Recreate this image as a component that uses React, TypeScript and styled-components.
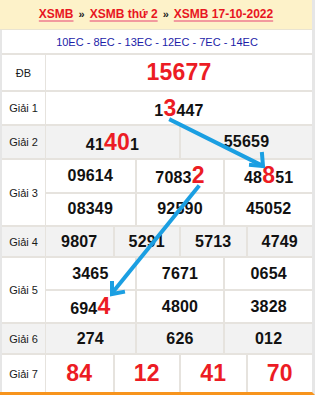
import React from 'react';
import styled, { createGlobalStyle } from 'styled-components';

const GlobalStyle = createGlobalStyle`
  html, body {
    margin: 0;
    padding: 0;
    background: #ffffff;
  }
  body {
    font-family: "Liberation Sans", Arial, sans-serif;
  }
`;

// Whole result card; the arrow overlay sits on top of it.
const Page = styled.div`
  position: relative;
  width: 315px;
  height: 395px;
`;

const Board = styled.div`
  width: 315px;
  height: 395px;
  box-sizing: border-box;
  display: flex;
  flex-direction: column;
  border-right: 3px solid #e6e6e6;
  border-bottom: 3px solid #f7941d;
`;

const Header = styled.div`
  height: 30px;
  box-sizing: border-box;
  flex-shrink: 0;
  display: flex;
  align-items: center;
  justify-content: center;
  gap: 5px;
  background: #fdf2c9;
  border-bottom: 1px solid #e9e4d2;
  font-size: 12px;
  font-weight: 700;
  padding-bottom: 2px;
`;

const Crumb = styled.a`
  color: #e8161f;
  text-decoration: underline;
  text-decoration-color: #f29a9e;
  text-decoration-thickness: 2px;
  text-underline-offset: 2px;
`;

const Sep = styled.span`
  color: #222;
  font-size: 11px;
`;

const Body = styled.div`
  flex: 1;
  display: flex;
  flex-direction: column;
  border-left: 2px solid #e6e6e6;
`;

const Codes = styled.div`
  height: 25px;
  box-sizing: border-box;
  flex-shrink: 0;
  display: flex;
  align-items: center;
  justify-content: center;
  border-bottom: 2px solid #e6e3de;
  color: #1c1ca8;
  font-size: 11px;
`;

const PrizeRow = styled.div<{ $h: number; $shade?: boolean; $last?: boolean }>`
  height: ${(p) => p.$h}px;
  box-sizing: border-box;
  flex-shrink: 0;
  display: grid;
  grid-template-columns: 44px 1fr;
  background: ${(p) => (p.$shade ? '#f2f2f2' : '#ffffff')};
  border-bottom: ${(p) => (p.$last ? 'none' : '2px solid #e6e3de')};
`;

const Label = styled.div`
  display: flex;
  align-items: center;
  justify-content: center;
  border-right: 1px solid #e6e3de;
  font-size: 11px;
  color: #1a1a1a;
`;

const Lines = styled.div`
  display: flex;
  flex-direction: column;
`;

const Line = styled.div<{ $cols: number }>`
  flex: 1;
  display: grid;
  grid-template-columns: repeat(${(p) => p.$cols}, 1fr);
  & + & {
    border-top: 2px solid #e6e3de;
  }
`;

const Cell = styled.div`
  display: flex;
  align-items: center;
  justify-content: center;
  & + & {
    border-left: 2px solid #e6e3de;
  }
`;

const Num = styled.span<{ $tone?: 'plain' | 'special' | 'red' }>`
  font-weight: 700;
  line-height: 1;
  letter-spacing: 0.2px;
  font-size: ${(p) => (p.$tone === 'special' ? '23px' : p.$tone === 'red' ? '23px' : '16px')};
  color: ${(p) => (p.$tone && p.$tone !== 'plain' ? '#ec1c24' : '#111111')};
`;

const Hi = styled.span`
  font-size: 23px;
  color: #ec1c24;
`;

const Overlay = styled.svg`
  position: absolute;
  left: 0;
  top: 0;
  pointer-events: none;
`;

type Prize = {
  label: string;
  h: number;
  lines: string[][];
  shade?: boolean;
  tone?: 'plain' | 'special' | 'red';
};

const prizes: Prize[] = [
  { label: 'ĐB', h: 37, lines: [['15677']], tone: 'special' },
  { label: 'Giải 1', h: 34, lines: [['1[3]447']] },
  { label: 'Giải 2', h: 34, shade: true, lines: [['41[40]1', '55659']] },
  {
    label: 'Giải 3',
    h: 67,
    lines: [
      ['09614', '7083[2]', '48[8]51'],
      ['08349', '92590', '45052'],
    ],
  },
  { label: 'Giải 4', h: 31, shade: true, lines: [['9807', '5291', '5713', '4749']] },
  {
    label: 'Giải 5',
    h: 66,
    lines: [
      ['3465', '7671', '0654'],
      ['694[4]', '4800', '3828'],
    ],
  },
  { label: 'Giải 6', h: 31, shade: true, lines: [['274', '626', '012']] },
  { label: 'Giải 7', h: 37, lines: [['84', '12', '41', '70']], tone: 'red' },
];

// "1[3]447" -> the bracketed digits are the highlighted (lô) part
function renderNumber(raw: string) {
  const parts = raw.split(/(\[[^\]]+\])/).filter(Boolean);
  return parts.map((part, i) =>
    part.startsWith('[') ? <Hi key={i}>{part.slice(1, -1)}</Hi> : <React.Fragment key={i}>{part}</React.Fragment>
  );
}

const BLUE = '#1b9fe2';

function Arrows() {
  return (
    <Overlay width={315} height={395} viewBox="0 0 315 395">
      <g stroke={BLUE} strokeWidth={4} fill="none" strokeLinecap="square" strokeLinejoin="miter">
        <line x1={171} y1={120} x2={261} y2={165} />
        <polyline points="251,165 263,166 262,154" />
        <line x1={198} y1={187} x2={113} y2={292} />
        <polyline points="112,283 112,294 123,292" />
      </g>
    </Overlay>
  );
}

export default function App() {
  return (
    <>
      <GlobalStyle />
      <Page>
        <Board>
          <Header>
            <Crumb>XSMB</Crumb>
            <Sep>»</Sep>
            <Crumb>XSMB thứ 2</Crumb>
            <Sep>»</Sep>
            <Crumb>XSMB 17-10-2022</Crumb>
          </Header>
          <Body>
            <Codes>10EC - 8EC - 13EC - 12EC - 7EC - 14EC</Codes>
            {prizes.map((prize, idx) => (
              <PrizeRow key={prize.label} $h={prize.h} $shade={prize.shade} $last={idx === prizes.length - 1}>
                <Label>{prize.label}</Label>
                <Lines>
                  {prize.lines.map((line, li) => (
                    <Line key={li} $cols={line.length}>
                      {line.map((n, ci) => (
                        <Cell key={ci}>
                          <Num $tone={prize.tone}>{renderNumber(n)}</Num>
                        </Cell>
                      ))}
                    </Line>
                  ))}
                </Lines>
              </PrizeRow>
            ))}
          </Body>
        </Board>
        <Arrows />
      </Page>
    </>
  );
}
